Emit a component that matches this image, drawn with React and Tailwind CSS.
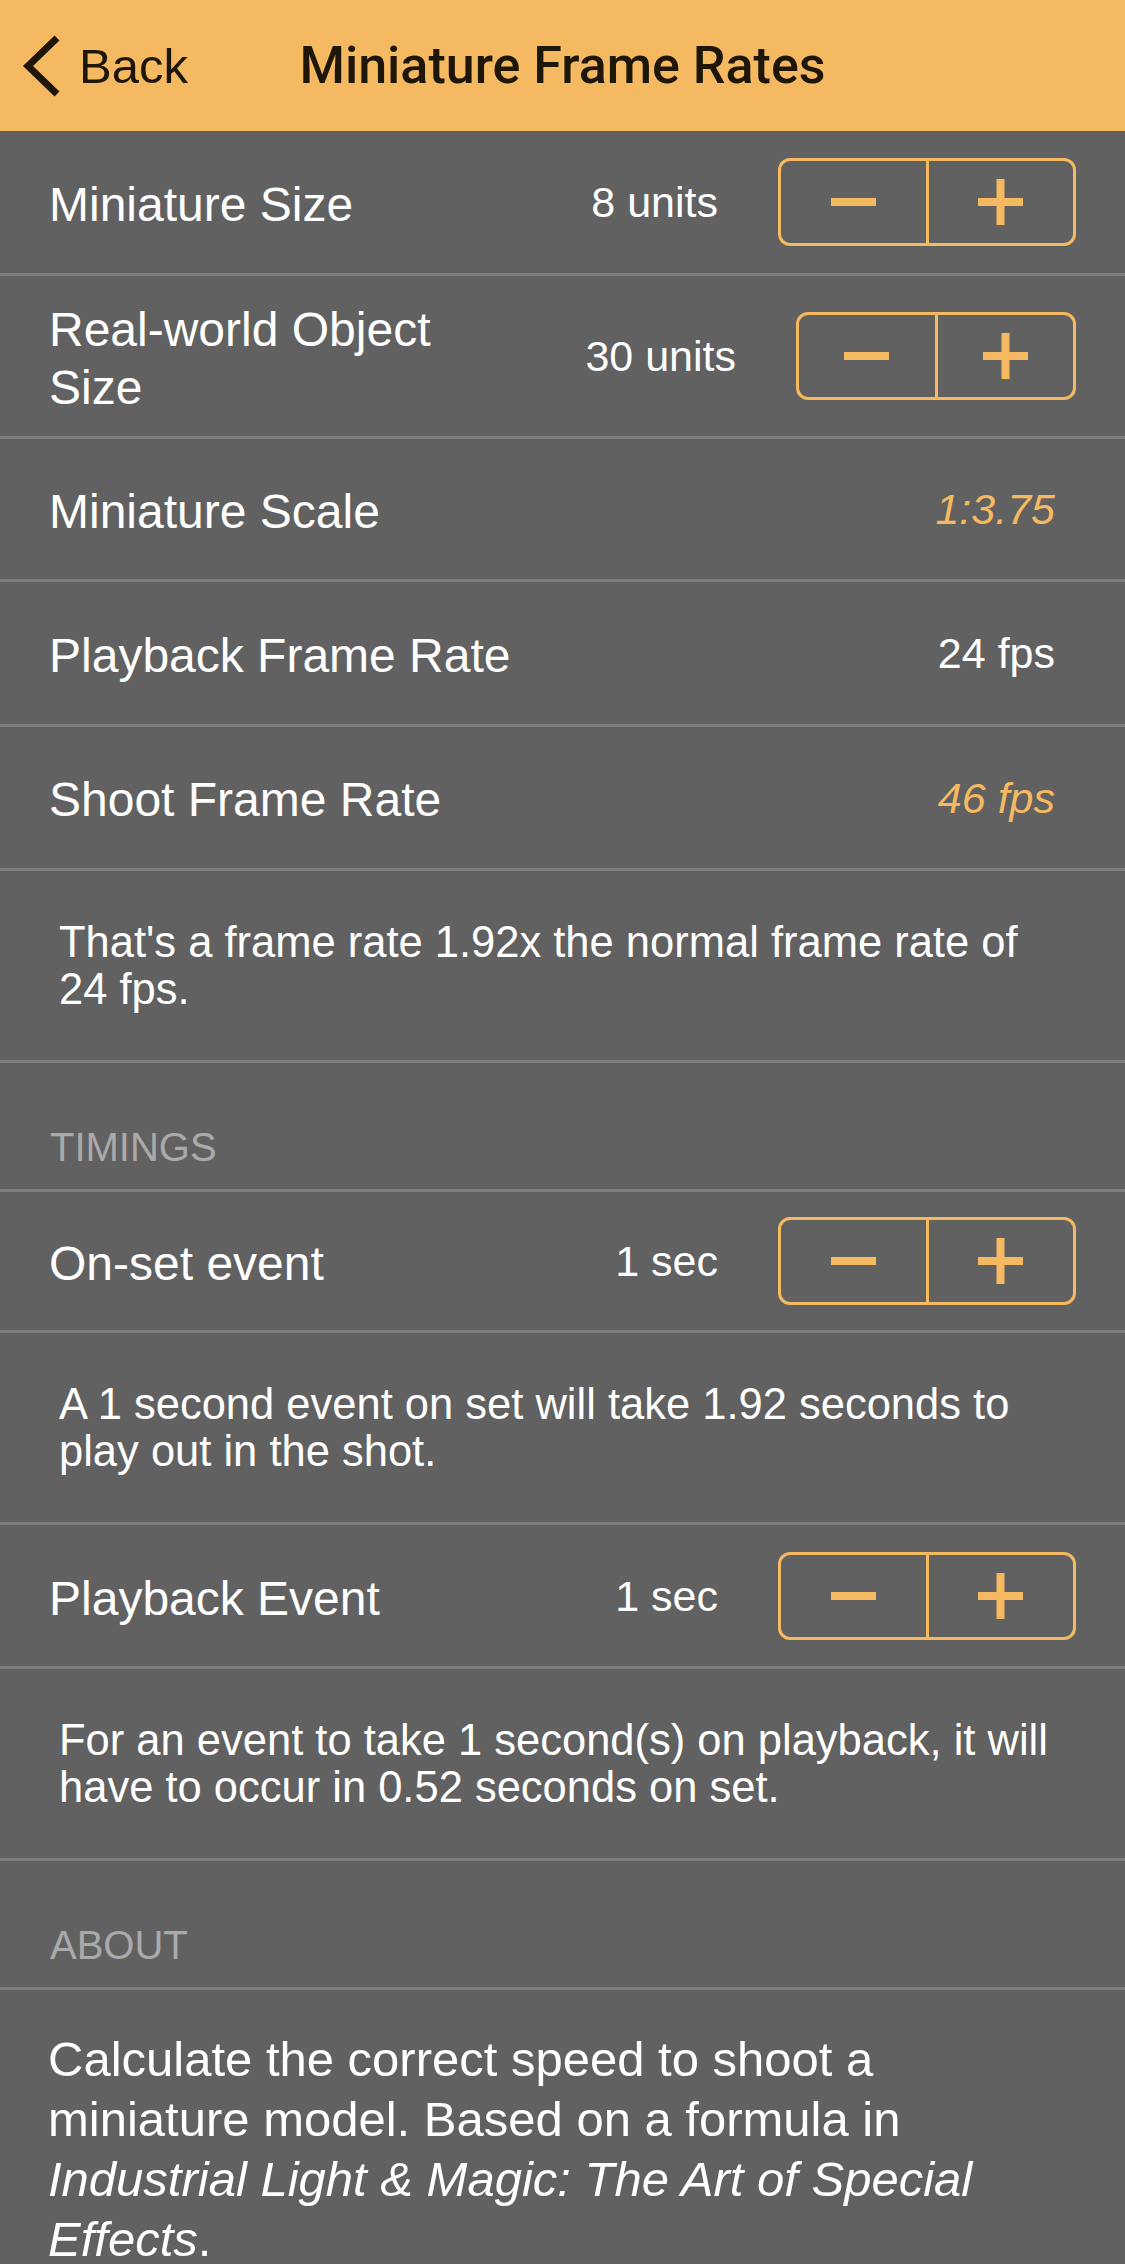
import React from "react";

const ORANGE = "#f5b961";

function Stepper({ narrow }) {
  return (
    <div
      className={`flex h-[88px] shrink-0 rounded-[12px] border-[3px] border-[#f5b961] ${
        narrow ? "w-[280px]" : "w-[298px]"
      }`}
    >
      <div className="flex flex-1 items-center justify-center border-r-[3px] border-[#f5b961]">
        <svg width="45" height="46" viewBox="0 0 45 46">
          <rect x="0" y="19" width="45" height="8" fill={ORANGE} />
        </svg>
      </div>
      <div className="flex flex-1 items-center justify-center">
        <svg width="45" height="46" viewBox="0 0 45 46">
          <rect x="0" y="19" width="45" height="8" fill={ORANGE} />
          <rect x="18.5" y="0" width="8" height="46" fill={ORANGE} />
        </svg>
      </div>
    </div>
  );
}

function StepperRow({ label, value, height, narrow }) {
  return (
    <div
      className={`flex items-center border-b-[3px] border-[#7e7e7e] pl-[49px] pr-[49px] ${height}`}
    >
      <span className="max-w-[450px] flex-1 pt-[6px] text-[48px] leading-[58px] text-white">{label}</span>
      <span className="ml-auto mr-[60px] text-[43px] leading-[50px] text-white">{value}</span>
      <Stepper narrow={narrow} />
    </div>
  );
}

function ValueRow({ label, value, accent, height }) {
  return (
    <div
      className={`flex items-center justify-between border-b-[3px] border-[#7e7e7e] pl-[49px] pr-[70px] ${height}`}
    >
      <span className="pt-[5px] text-[48px] leading-[58px] text-white">{label}</span>
      <span
        className={
          accent
            ? "text-[43px] leading-[50px] italic text-[#f5b961]"
            : "text-[43px] leading-[50px] text-white"
        }
      >
        {value}
      </span>
    </div>
  );
}

function Note({ children }) {
  return (
    <div className="flex h-[192px] items-center border-b-[3px] border-[#7e7e7e] px-[59px]">
      <p className="text-[43.5px] leading-[47px] text-white">{children}</p>
    </div>
  );
}

function SectionHeader({ title }) {
  return (
    <div className="flex h-[129px] items-end border-b-[3px] border-[#7e7e7e] px-[50px] pb-[22px]">
      <span className="text-[40px] leading-[40px] text-[#aaaaaa]">{title}</span>
    </div>
  );
}

export default function App() {
  return (
    <div className="min-h-screen w-[1125px] bg-[#616161] font-['Liberation_Sans',Arial,sans-serif]">
      {/* nav bar */}
      <div className="grid h-[131px] grid-cols-[1fr_auto_1fr] items-center bg-[#f5b961] text-[#1e1608]">
        <div className="flex items-center pl-[22px]">
          <svg width="40" height="64" viewBox="0 0 40 64">
            <path d="M35 4 L6 32 L35 60" fill="none" stroke="#1e1608" strokeWidth="7" />
          </svg>
          <span className="ml-[17px] text-[49px] leading-[58px]">Back</span>
        </div>
        <h1 className="font-['Roboto',sans-serif] text-[52px] font-medium leading-[58px]">
          Miniature Frame Rates
        </h1>
        <div />
      </div>

      <StepperRow label="Miniature Size" value="8 units" height="h-[145px]" />
      <StepperRow label="Real-world Object Size" value="30 units" height="h-[163px]" narrow />
      <ValueRow label="Miniature Scale" value="1:3.75" accent height="h-[143px]" />
      <ValueRow label="Playback Frame Rate" value="24 fps" height="h-[145px]" />
      <ValueRow label="Shoot Frame Rate" value="46 fps" accent height="h-[144px]" />
      <Note>That's a frame rate 1.92x the normal frame rate of 24 fps.</Note>

      <SectionHeader title="TIMINGS" />
      <StepperRow label="On-set event" value="1 sec" height="h-[141px]" />
      <Note>A 1 second event on set will take 1.92 seconds to play out in the shot.</Note>
      <StepperRow label="Playback Event" value="1 sec" height="h-[144px]" />
      <Note>For an event to take 1 second(s) on playback, it will have to occur in 0.52 seconds on set.</Note>

      <SectionHeader title="ABOUT" />
      <div className="px-[48px] pt-[39px] pb-[40px]">
        <p className="text-[49px] leading-[60px] text-white">
          Calculate the correct speed to shoot a miniature model. Based on a formula in{" "}
          <em>Industrial Light &amp; Magic: The Art of Special Effects</em>.
        </p>
      </div>
    </div>
  );
}
